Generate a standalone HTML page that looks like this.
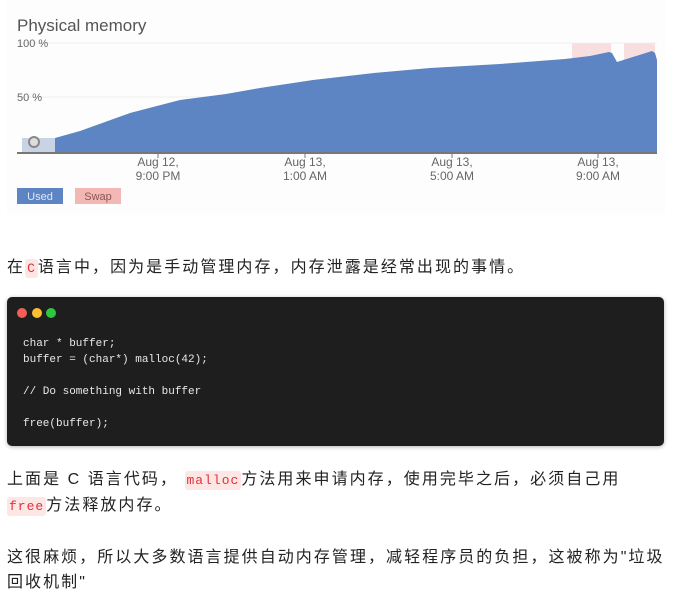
<!DOCTYPE html>
<html><head><meta charset="utf-8"><style>
body{margin:0;width:677px;height:607px;background:#fff;overflow:hidden;font-family:"Liberation Sans","Noto Sans CJK SC",sans-serif;}
.t{position:absolute;left:7px;font-size:16px;letter-spacing:2.05px;color:#222;white-space:nowrap;line-height:26px}
code.i{font-family:"Liberation Mono",monospace;font-size:13px;color:#e0303a;background:#fde6e3;border-radius:3px;padding:2px 2px;letter-spacing:1px}
.code{position:absolute;left:7px;top:297px;width:657px;height:149px;background:#1e1e1e;border-radius:5px;box-shadow:0 1px 4px rgba(0,0,0,.3)}
.dot{position:absolute;top:308px;width:10px;height:10px;border-radius:50%}
pre{position:absolute;left:23px;top:336px;margin:0;font-family:"Liberation Mono",monospace;font-size:11px;line-height:16px;color:#e8e8e8}
</style></head><body>
<svg width="677" height="220" style="position:absolute;left:0;top:0" font-family="Liberation Sans, sans-serif">
<rect x="7" y="0" width="658" height="215" fill="#fdfdfd"/>
<text x="17" y="31" font-size="17" fill="#555">Physical memory</text>
<rect x="572" y="43" width="39" height="110" fill="#f8dede"/>
<rect x="624" y="43" width="31" height="110" fill="#f8dede"/>
<line x1="17" y1="43" x2="657" y2="43" stroke="#eee"/>
<line x1="17" y1="97" x2="657" y2="97" stroke="#eee"/>
<text x="17" y="47" font-size="11" fill="#666">100 %</text>
<text x="17" y="101" font-size="11" fill="#666">50 %</text>
<rect x="22" y="138" width="33" height="15" fill="#c8d4e6"/>
<circle cx="34" cy="142" r="5" fill="#ddd" stroke="#888" stroke-width="2"/>
<path d="M55 138 L80 131 L130 113 L180 100 L226 94 L260 88 L313 80 L374 73 L430 68 L500 64 L565 59 L590 56 L609 52 L612 53 L617 62 L652 51 L655 53 L657 60 L657 153 L55 153 Z" fill="#5d84c3"/>
<line x1="17" y1="153" x2="657" y2="153" stroke="#777" stroke-width="2"/>
<g stroke="#777"><line x1="158" y1="153" x2="158" y2="158"/><line x1="305" y1="153" x2="305" y2="158"/><line x1="452" y1="153" x2="452" y2="158"/><line x1="598" y1="153" x2="598" y2="158"/></g>
<g font-size="12" fill="#666" text-anchor="middle">
<text x="158" y="166">Aug 12,</text><text x="158" y="180">9:00 PM</text>
<text x="305" y="166">Aug 13,</text><text x="305" y="180">1:00 AM</text>
<text x="452" y="166">Aug 13,</text><text x="452" y="180">5:00 AM</text>
<text x="598" y="166">Aug 13,</text><text x="598" y="180">9:00 AM</text>
</g>
<rect x="17" y="188" width="46" height="16" fill="#5d84c3"/>
<text x="40" y="200" font-size="11" fill="#dfe7f5" text-anchor="middle">Used</text>
<rect x="75" y="188" width="46" height="16" fill="#f4b8b4"/>
<text x="98" y="200" font-size="11" fill="#8a5555" text-anchor="middle">Swap</text>
</svg>
<div class="t" style="top:255px">在<code class="i">C</code>语言中，因为是手动管理内存，内存泄露是经常出现的事情。</div>
<div class="code"></div>
<div class="dot" style="left:17px;background:#f25f58"></div>
<div class="dot" style="left:32px;background:#fbbe2e"></div>
<div class="dot" style="left:46px;background:#2ec840"></div>
<pre>char * buffer;
buffer = (char*) malloc(42);

// Do something with buffer

free(buffer);</pre>
<div class="t" style="top:467px">上面是 C 语言代码， <code class="i">malloc</code>方法用来申请内存，使用完毕之后，必须自己用</div>
<div class="t" style="top:493px"><code class="i">free</code>方法释放内存。</div>
<div class="t" style="top:545px">这很麻烦，所以大多数语言提供自动内存管理，减轻程序员的负担，这被称为"垃圾</div>
<div class="t" style="top:570px">回收机制"</div>
</body></html>
